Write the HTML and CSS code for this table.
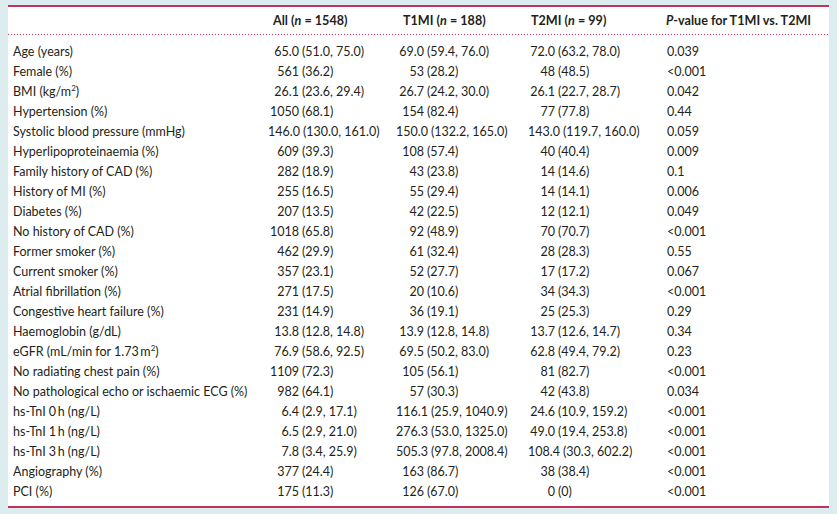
FILE: index.html
```html
<!DOCTYPE html>
<html lang="en">
<head>
<meta charset="utf-8">
<title>Baseline characteristics</title>
<link rel="stylesheet" href="styles.css">
</head>
<body>
<div class="panel">
  <div class="row head">
    <div class="cell"></div>
    <div class="cell h-all">All (<i>n</i> = 1548)</div>
    <div class="cell h-t1">T1MI (<i>n</i> = 188)</div>
    <div class="cell h-t2">T2MI (<i>n</i> = 99)</div>
    <div class="cell h-p"><i>P</i>-value for T1MI vs. T2MI</div>
  </div>
  <div class="body">
    <div class="row"><div class="cell">Age (years)</div><div class="cell v-all"><span class="a">65.0</span><span class="b">(51.0, 75.0)</span></div><div class="cell v-t1"><span class="a">69.0</span><span class="b">(59.4, 76.0)</span></div><div class="cell v-t2"><span class="a">72.0</span><span class="b">(63.2, 78.0)</span></div><div class="cell v-p">0.039</div></div>
    <div class="row"><div class="cell">Female (%)</div><div class="cell v-all"><span class="a">561</span><span class="b">(36.2)</span></div><div class="cell v-t1"><span class="a">53</span><span class="b">(28.2)</span></div><div class="cell v-t2"><span class="a">48</span><span class="b">(48.5)</span></div><div class="cell v-p">&lt;0.001</div></div>
    <div class="row"><div class="cell">BMI (kg/m<sup>2</sup>)</div><div class="cell v-all"><span class="a">26.1</span><span class="b">(23.6, 29.4)</span></div><div class="cell v-t1"><span class="a">26.7</span><span class="b">(24.2, 30.0)</span></div><div class="cell v-t2"><span class="a">26.1</span><span class="b">(22.7, 28.7)</span></div><div class="cell v-p">0.042</div></div>
    <div class="row"><div class="cell">Hypertension (%)</div><div class="cell v-all"><span class="a">1050</span><span class="b">(68.1)</span></div><div class="cell v-t1"><span class="a">154</span><span class="b">(82.4)</span></div><div class="cell v-t2"><span class="a">77</span><span class="b">(77.8)</span></div><div class="cell v-p">0.44</div></div>
    <div class="row"><div class="cell">Systolic blood pressure (mmHg)</div><div class="cell v-all"><span class="a">146.0</span><span class="b">(130.0, 161.0)</span></div><div class="cell v-t1"><span class="a">150.0</span><span class="b">(132.2, 165.0)</span></div><div class="cell v-t2"><span class="a">143.0</span><span class="b">(119.7, 160.0)</span></div><div class="cell v-p">0.059</div></div>
    <div class="row"><div class="cell">Hyperlipoproteinaemia (%)</div><div class="cell v-all"><span class="a">609</span><span class="b">(39.3)</span></div><div class="cell v-t1"><span class="a">108</span><span class="b">(57.4)</span></div><div class="cell v-t2"><span class="a">40</span><span class="b">(40.4)</span></div><div class="cell v-p">0.009</div></div>
    <div class="row"><div class="cell">Family history of CAD (%)</div><div class="cell v-all"><span class="a">282</span><span class="b">(18.9)</span></div><div class="cell v-t1"><span class="a">43</span><span class="b">(23.8)</span></div><div class="cell v-t2"><span class="a">14</span><span class="b">(14.6)</span></div><div class="cell v-p">0.1</div></div>
    <div class="row"><div class="cell">History of MI (%)</div><div class="cell v-all"><span class="a">255</span><span class="b">(16.5)</span></div><div class="cell v-t1"><span class="a">55</span><span class="b">(29.4)</span></div><div class="cell v-t2"><span class="a">14</span><span class="b">(14.1)</span></div><div class="cell v-p">0.006</div></div>
    <div class="row"><div class="cell">Diabetes (%)</div><div class="cell v-all"><span class="a">207</span><span class="b">(13.5)</span></div><div class="cell v-t1"><span class="a">42</span><span class="b">(22.5)</span></div><div class="cell v-t2"><span class="a">12</span><span class="b">(12.1)</span></div><div class="cell v-p">0.049</div></div>
    <div class="row"><div class="cell">No history of CAD (%)</div><div class="cell v-all"><span class="a">1018</span><span class="b">(65.8)</span></div><div class="cell v-t1"><span class="a">92</span><span class="b">(48.9)</span></div><div class="cell v-t2"><span class="a">70</span><span class="b">(70.7)</span></div><div class="cell v-p">&lt;0.001</div></div>
    <div class="row"><div class="cell">Former smoker (%)</div><div class="cell v-all"><span class="a">462</span><span class="b">(29.9)</span></div><div class="cell v-t1"><span class="a">61</span><span class="b">(32.4)</span></div><div class="cell v-t2"><span class="a">28</span><span class="b">(28.3)</span></div><div class="cell v-p">0.55</div></div>
    <div class="row"><div class="cell">Current smoker (%)</div><div class="cell v-all"><span class="a">357</span><span class="b">(23.1)</span></div><div class="cell v-t1"><span class="a">52</span><span class="b">(27.7)</span></div><div class="cell v-t2"><span class="a">17</span><span class="b">(17.2)</span></div><div class="cell v-p">0.067</div></div>
    <div class="row"><div class="cell">Atrial fibrillation (%)</div><div class="cell v-all"><span class="a">271</span><span class="b">(17.5)</span></div><div class="cell v-t1"><span class="a">20</span><span class="b">(10.6)</span></div><div class="cell v-t2"><span class="a">34</span><span class="b">(34.3)</span></div><div class="cell v-p">&lt;0.001</div></div>
    <div class="row"><div class="cell">Congestive heart failure (%)</div><div class="cell v-all"><span class="a">231</span><span class="b">(14.9)</span></div><div class="cell v-t1"><span class="a">36</span><span class="b">(19.1)</span></div><div class="cell v-t2"><span class="a">25</span><span class="b">(25.3)</span></div><div class="cell v-p">0.29</div></div>
    <div class="row"><div class="cell">Haemoglobin (g/dL)</div><div class="cell v-all"><span class="a">13.8</span><span class="b">(12.8, 14.8)</span></div><div class="cell v-t1"><span class="a">13.9</span><span class="b">(12.8, 14.8)</span></div><div class="cell v-t2"><span class="a">13.7</span><span class="b">(12.6, 14.7)</span></div><div class="cell v-p">0.34</div></div>
    <div class="row"><div class="cell">eGFR (mL/min for 1.73&#8201;m<sup>2</sup>)</div><div class="cell v-all"><span class="a">76.9</span><span class="b">(58.6, 92.5)</span></div><div class="cell v-t1"><span class="a">69.5</span><span class="b">(50.2, 83.0)</span></div><div class="cell v-t2"><span class="a">62.8</span><span class="b">(49.4, 79.2)</span></div><div class="cell v-p">0.23</div></div>
    <div class="row"><div class="cell">No radiating chest pain (%)</div><div class="cell v-all"><span class="a">1109</span><span class="b">(72.3)</span></div><div class="cell v-t1"><span class="a">105</span><span class="b">(56.1)</span></div><div class="cell v-t2"><span class="a">81</span><span class="b">(82.7)</span></div><div class="cell v-p">&lt;0.001</div></div>
    <div class="row"><div class="cell">No pathological echo or ischaemic ECG (%)</div><div class="cell v-all"><span class="a">982</span><span class="b">(64.1)</span></div><div class="cell v-t1"><span class="a">57</span><span class="b">(30.3)</span></div><div class="cell v-t2"><span class="a">42</span><span class="b">(43.8)</span></div><div class="cell v-p">0.034</div></div>
    <div class="row"><div class="cell">hs-TnI 0&#8201;h (ng/L)</div><div class="cell v-all"><span class="a">6.4</span><span class="b">(2.9, 17.1)</span></div><div class="cell v-t1"><span class="a">116.1</span><span class="b">(25.9, 1040.9)</span></div><div class="cell v-t2"><span class="a">24.6</span><span class="b">(10.9, 159.2)</span></div><div class="cell v-p">&lt;0.001</div></div>
    <div class="row"><div class="cell">hs-TnI 1&#8201;h (ng/L)</div><div class="cell v-all"><span class="a">6.5</span><span class="b">(2.9, 21.0)</span></div><div class="cell v-t1"><span class="a">276.3</span><span class="b">(53.0, 1325.0)</span></div><div class="cell v-t2"><span class="a">49.0</span><span class="b">(19.4, 253.8)</span></div><div class="cell v-p">&lt;0.001</div></div>
    <div class="row"><div class="cell">hs-TnI 3&#8201;h (ng/L)</div><div class="cell v-all"><span class="a">7.8</span><span class="b">(3.4, 25.9)</span></div><div class="cell v-t1"><span class="a">505.3</span><span class="b">(97.8, 2008.4)</span></div><div class="cell v-t2"><span class="a">108.4</span><span class="b">(30.3, 602.2)</span></div><div class="cell v-p">&lt;0.001</div></div>
    <div class="row"><div class="cell">Angiography (%)</div><div class="cell v-all"><span class="a">377</span><span class="b">(24.4)</span></div><div class="cell v-t1"><span class="a">163</span><span class="b">(86.7)</span></div><div class="cell v-t2"><span class="a">38</span><span class="b">(38.4)</span></div><div class="cell v-p">&lt;0.001</div></div>
    <div class="row"><div class="cell">PCI (%)</div><div class="cell v-all"><span class="a">175</span><span class="b">(11.3)</span></div><div class="cell v-t1"><span class="a">126</span><span class="b">(67.0)</span></div><div class="cell v-t2"><span class="a">0</span><span class="b">(0)</span></div><div class="cell v-p">&lt;0.001</div></div>
  </div>
</div>
</body>
</html>
```

FILE: styles.css
```css
html, body {
  margin: 0;
  padding: 0;
}
body {
  background: #ddedef;
  font-family: "Lato", "Open Sans", sans-serif;
  font-size: 12.5px;
  color: #231f20;
  padding: 5px 8px 6px 8px;
}
.panel {
  background: #ffffff;
  border-top: 2px solid #c4345a;
  border-bottom: 2px solid #c4345a;
}
.row {
  display: grid;
  grid-template-columns: 255px 128px 132px 135px 1fr;
  padding-left: 5px;
  height: 20px;
  align-items: center;
  white-space: nowrap;
}
.head {
  height: 27px;
  padding-bottom: 1px;
  font-weight: bold;
  font-size: 12.6px;
  background-image: linear-gradient(to right, #c4345a 1px, transparent 1px);
  background-size: 3px 1px;
  background-repeat: repeat-x;
  background-position: left bottom;
}
.body {
  padding: 6px 0 5px 0;
}
.h-all { padding-left: 5px; }
.h-t1 { padding-left: 7px; }
.h-t2 { padding-left: 3px; }
.h-p { padding-left: 3px; }
.a {
  display: inline-block;
  text-align: right;
}
.b {
  padding-left: 3px;
}
.v-all .a { min-width: 31px; }
.v-t1 .a { min-width: 28px; }
.v-t2 .a { min-width: 27px; }
.v-p { padding-left: 4px; }
sup {
  font-size: 8px;
  line-height: 0;
  vertical-align: 5px;
}
```
